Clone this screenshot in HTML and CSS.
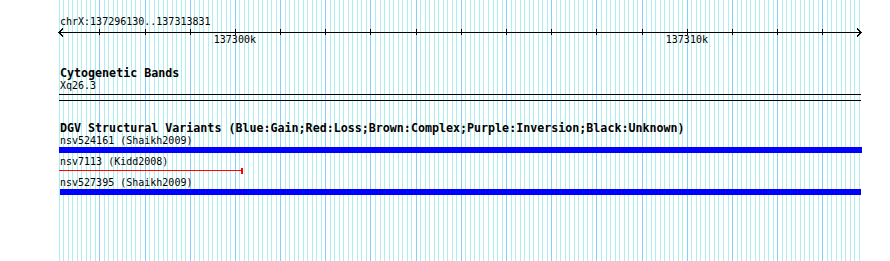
FILE: index.html
```html
<!DOCTYPE html>
<html lang="en">
<head>
  <meta charset="UTF-8">
  <title>chrX:137296130..137313831</title>
  <link rel="stylesheet" href="styles.css">
</head>
<body>

  <div class="panel">
    <!-- grid lines, filled in by script.js -->
    <svg class="grid" id="grid" width="890" height="261"></svg>

    <div class="tracks">

      <!-- Ruler -->
      <section class="ruler">
        <div class="ruler-name">chrX:137296130..137313831</div>
        <svg class="axis" id="axis" width="890" height="9"></svg>
        <div class="ruler-labels">
          <span class="tick-label" style="left: 174.9px">137300k</span>
          <span class="tick-label" style="left: 626.9px">137310k</span>
        </div>
      </section>

      <!-- Cytogenetic Bands -->
      <section class="track cyto">
        <h2 class="track-title">Cytogenetic Bands</h2>
        <div class="feature-label">Xq26.3</div>
        <div class="band"></div>
      </section>

      <!-- DGV -->
      <section class="track dgv">
        <h2 class="track-title">DGV Structural Variants (Blue:Gain;Red:Loss;Brown:Complex;Purple:Inversion;Black:Unknown)</h2>
        <div class="feature-label">nsv524161 (Shaikh2009)</div>
        <div class="bar gain" style="margin-left: -1px; width: 803px"></div>
        <div class="feature-label gap">nsv7113 (Kidd2008)</div>
        <div class="bar loss" style="margin-left: -1px; width: 184px"></div>
        <div class="feature-label gap">nsv527395 (Shaikh2009)</div>
        <div class="bar gain" style="width: 801px"></div>
      </section>

    </div>
  </div>

  <script src="script.js"></script>
</body>
</html>
```

FILE: styles.css
```css
body { margin: 0; padding: 0; background-color: #fff; font-family: "DejaVu Sans Mono", "Liberation Mono", monospace; color: #000; }

.panel { position: relative; width: 890px; height: 261px; overflow: hidden; }
.grid { position: absolute; left: 0; top: 0; z-index: 0; }
.grid line { shape-rendering: crispEdges; stroke-width: 1; }
.grid .minor { stroke: #afeeee; }
.grid .major { stroke: #87cefa; }

.tracks { position: relative; z-index: 1; padding-left: 60px; }

/* ruler */
.ruler-name { margin-top: 15px; font-size: 10px; line-height: 13px; }
.axis { display: block; margin-left: -60px; }
.axis line, .axis polyline { shape-rendering: crispEdges; stroke: #000; stroke-width: 1; fill: none; }
.ruler-labels { position: relative; margin-top: -4px; height: 13px; }
.tick-label { position: absolute; top: 0; transform: translateX(-50%); font-size: 10px; line-height: 13px; white-space: nowrap; }

/* tracks */
.track { margin-top: 21px; }
.track-title { margin: 0; font-size: 11.67px; line-height: 12px; font-weight: bold; white-space: nowrap; }
.feature-label { font-size: 10px; line-height: 13px; white-space: nowrap; }
.feature-label.gap { margin-top: 2px; }

.band { margin-top: 2px; margin-left: -1px; width: 802px; height: 7px; box-sizing: border-box; border-top: 1px solid #000; border-bottom: 1px solid #000; }

.bar { height: 6px; }
.bar.gain { background-color: #0000ff; }
.bar.loss { box-sizing: border-box; border-right: 2px solid #ff0000; background: linear-gradient(#ff0000, #ff0000) 0 2px / 100% 1px no-repeat; }
```

FILE: script.js
```js
// Draw the grid and the ruler ticks from the genomic coordinates
const start = 137296130;
const end = 137313831;
const left = 60;
const width = 800;
const scale = width / (end - start);
const svgNS = "http://www.w3.org/2000/svg";

function bpToX(bp) {
  return Math.round(left + (bp - start) * scale) + 0.5;
}

function addLine(svg, x1, y1, x2, y2, cls) {
  const line = document.createElementNS(svgNS, "line");
  line.setAttribute("x1", x1);
  line.setAttribute("y1", y1);
  line.setAttribute("x2", x2);
  line.setAttribute("y2", y2);
  if (cls) line.setAttribute("class", cls);
  svg.appendChild(line);
}

const grid = document.getElementById("grid");
const axis = document.getElementById("axis");

for (let bp = Math.floor(start / 100) * 100; bp <= end; bp += 100) {
  const x = bpToX(bp);
  const major = bp % 1000 === 0;
  addLine(grid, x, 0, x, 261, major ? "major" : "minor");
  if (major) addLine(axis, x, 1, x, 7);
}

// axis line with arrows at both ends
addLine(axis, 59, 4.5, 862, 4.5);
const arrows = [["63,0.5 59,4.5 63,8.5"], ["857,0.5 861,4.5 857,8.5"]];
arrows.forEach(function (pts) {
  const p = document.createElementNS(svgNS, "polyline");
  p.setAttribute("points", pts[0]);
  axis.appendChild(p);
});
```
